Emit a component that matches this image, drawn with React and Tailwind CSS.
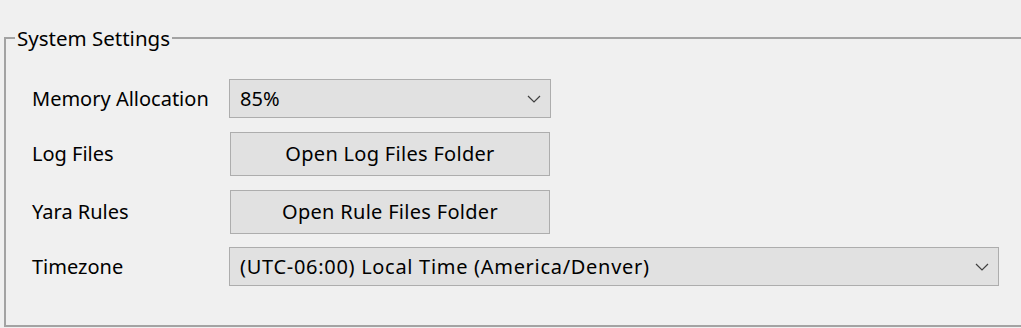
import React from "react";

const font = { fontFamily: '"Noto Sans", "Open Sans", sans-serif' };

function Chevron() {
  return (
    <svg width="14" height="8" viewBox="0 0 14 8" className="shrink-0">
      <path d="M1 1 L7 7 L13 1" fill="none" stroke="#404040" strokeWidth="1.2" />
    </svg>
  );
}

function Combo({ value, width, textClass = "" }) {
  return (
    <div
      className={`flex h-[39px] items-center justify-between border border-[#adadad] bg-[#e1e1e1] pl-[10px] pr-[9px] ${width}`}
    >
      <span className={textClass}>{value}</span>
      <Chevron />
    </div>
  );
}

function Button({ children }) {
  return (
    <button className="flex h-[44px] w-[320px] items-center justify-center border border-[#adadad] bg-[#e1e1e1] text-black tracking-[0.3px]">
      {children}
    </button>
  );
}

export default function App() {
  return (
    <div
      className="h-[328px] w-[1021px] overflow-hidden bg-[#f0f0f0] text-[20px] leading-[24px] text-black"
      style={font}
    >
      <fieldset className="ml-[4px] mt-[27px] h-[300px] w-[1040px] border-2 border-[#a3a3a3] p-0">
        <legend className="ml-[9px] px-[2px] text-[20.5px] leading-[22px]">System Settings</legend>
        <div className="flex flex-col pl-[26px] pt-[30px]">
          <div className="flex items-center">
            <span className="w-[197px]">Memory Allocation</span>
            <Combo value="85%" width="w-[322px]" />
          </div>
          <div className="mt-[14px] flex items-center">
            <span className="w-[198px]">Log Files</span>
            <Button>Open Log Files Folder</Button>
          </div>
          <div className="mt-[14px] flex items-center">
            <span className="w-[198px]">Yara Rules</span>
            <Button>Open Rule Files Folder</Button>
          </div>
          <div className="mt-[13px] flex items-center">
            <span className="w-[197px]">Timezone</span>
            <Combo
              value="(UTC-06:00) Local Time (America/Denver)"
              width="w-[770px]"
              textClass="tracking-[0.7px]"
            />
          </div>
        </div>
      </fieldset>
    </div>
  );
}
